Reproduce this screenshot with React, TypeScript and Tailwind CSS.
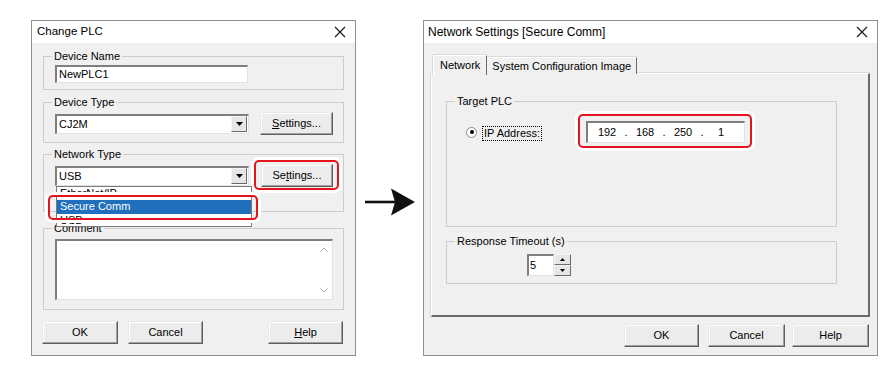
import React from "react";

const CloseX = () => (
  <svg width="12" height="12" viewBox="0 0 12 12">
    <path d="M1 1 L11 11 M11 1 L1 11" stroke="#1a1a1a" strokeWidth="1.2" fill="none" />
  </svg>
);

const Btn = ({ children, className = "" }: { children: React.ReactNode; className?: string }) => (
  <div
    className={`flex h-[23px] items-center justify-center border border-t-[#e8e8e8] border-l-[#e8e8e8] border-r-[#5e5e5e] border-b-[#5e5e5e] bg-[#ececec] text-[11px] text-black shadow-[inset_-1px_-1px_0_#a0a0a0,inset_1px_1px_0_#ffffff] ${className}`}
  >
    {children}
  </div>
);

const Sunken = ({ children, className = "" }: { children?: React.ReactNode; className?: string }) => (
  <div
    className={`border-t-2 border-l-2 border-r border-b border-t-[#7e7e7e] border-l-[#7e7e7e] border-r-[#e3e3e3] border-b-[#e3e3e3] bg-white ${className}`}
  >
    {children}
  </div>
);

const DropArrow = () => (
  <div className="flex h-[16px] w-[16px] items-center justify-center border border-t-[#f4f4f4] border-l-[#f4f4f4] border-r-[#6a6a6a] border-b-[#6a6a6a] bg-[#e6e6e6]">
    <svg width="7" height="4" viewBox="0 0 7 4">
      <path d="M0 0 L7 0 L3.5 4 Z" fill="#000" />
    </svg>
  </div>
);

const Combo = ({ text, children }: { text: string; children?: React.ReactNode }) => (
  <div className="relative">
    <Sunken className="flex h-[20px] w-[194px] items-center justify-between pl-[2px] pr-[1px]">
      <span className="text-[11px] text-black">{text}</span>
      <DropArrow />
    </Sunken>
    {children}
  </div>
);

const Group = ({
  label,
  className = "",
  children,
}: {
  label: string;
  className?: string;
  children: React.ReactNode;
}) => (
  <fieldset className={`border border-[#cdcdcd] ${className}`}>
    <legend className="ml-[8px] px-[2px] text-[11px] leading-[13px] text-black">{label}</legend>
    {children}
  </fieldset>
);

const RedBox = ({ className }: { className: string }) => (
  <div
    className={`pointer-events-none absolute rounded-[5px] border-2 border-[#e3141c] shadow-[0_0_0_3px_#ffffff] ${className}`}
  />
);

export default function App() {
  return (
    <div className="flex h-[382px] w-[893px] items-start overflow-hidden bg-white font-['Liberation_Sans',Arial,sans-serif]">
      {/* Left dialog */}
      <div className="ml-[31px] mt-[20px] flex h-[336px] w-[325px] flex-col border border-[#8f8f8f] bg-[#f0f0f0]">
        <div className="flex h-[22px] items-center justify-between bg-white pl-[5px] pr-[9px]">
          <span className="text-[11.5px] text-black">Change PLC</span>
          <CloseX />
        </div>
        <div className="flex flex-col px-[11px]">
          <Group label="Device Name" className="mt-[7px]">
            <div className="pl-[11px] pt-[2px] pb-[6px]">
              <Sunken className="flex h-[18px] w-[193px] items-center pl-[2px] text-[11px] text-black">
                NewPLC1
              </Sunken>
            </div>
          </Group>
          <Group label="Device Type" className="mt-[6px]">
            <div className="flex items-center pl-[11px] pt-[3px] pb-[7px]">
              <Combo text="CJ2M" />
              <Btn className="ml-[11px] w-[73px]">
                <span>
                  <span className="underline">S</span>ettings...
                </span>
              </Btn>
            </div>
          </Group>
          <Group label="Network Type" className="mt-[5px]">
            <div className="flex items-center pl-[11px] pt-[3px] pb-[24px]">
              <Combo text="USB">
                <div className="absolute left-[1px] top-full z-10 flex h-[41px] w-[196px] flex-col overflow-hidden border border-[#7a7a7a] bg-white">
                  <div className="flex h-[13px] items-center pl-[3px] text-[11px] text-black">EtherNet/IP</div>
                  <div className="relative flex h-[14px] items-center bg-[#1f6fbd] pl-[3px] text-[11px] text-white">
                    Secure Comm
                  </div>
                  <div className="flex h-[13px] items-start pl-[3px] text-[11px] leading-[13px] text-black">USB</div>
                </div>
                <div className="absolute left-[1px] top-[34px] z-20 h-[14px] w-[196px]">
                  <RedBox className="-left-[8px] -right-[6px] -top-[5px] -bottom-[6px]" />
                </div>
              </Combo>
              <div className="relative ml-[12px]">
                <Btn className="w-[72px]">
                  <span>
                    Se<span className="underline">t</span>tings...
                  </span>
                </Btn>
                <RedBox className="-left-[7px] -right-[6px] -top-[4px] -bottom-[3px]" />
              </div>
            </div>
          </Group>
          <Group label="Comment" className="mt-[10px]">
            <div className="pl-[11px] pr-[9px] pt-[4px] pb-[9px]">
              <Sunken className="flex h-[61px] w-[278px] justify-end">
                <div className="flex w-[16px] flex-col items-center justify-between py-[6px]">
                  <svg width="8" height="5" viewBox="0 0 8 5">
                    <path d="M0.5 4.5 L4 1 L7.5 4.5" stroke="#a8a8a8" fill="none" />
                  </svg>
                  <svg width="8" height="5" viewBox="0 0 8 5">
                    <path d="M0.5 0.5 L4 4 L7.5 0.5" stroke="#a8a8a8" fill="none" />
                  </svg>
                </div>
              </Sunken>
            </div>
          </Group>
        </div>
        <div className="mt-[11px] flex pl-[10px] pr-[12px]">
          <Btn className="w-[76px]">OK</Btn>
          <Btn className="ml-[10px] w-[75px]">Cancel</Btn>
          <Btn className="ml-auto w-[75px]">
            <span>
              <span className="underline">H</span>elp
            </span>
          </Btn>
        </div>
      </div>

      {/* Arrow */}
      <svg className="ml-[8px] mt-[187px] shrink-0" width="52" height="30" viewBox="0 0 52 30">
        <line x1="1" y1="15" x2="32" y2="15" stroke="#111" strokeWidth="2.6" />
        <path d="M27 1.5 L51 15 L27 28.5 L31 15 Z" fill="#111" />
      </svg>

      {/* Right dialog */}
      <div className="ml-[7px] mt-[20px] flex h-[336px] w-[455px] flex-col border border-[#8f8f8f] bg-[#f0f0f0]">
        <div className="flex h-[22px] items-center justify-between bg-white pl-[4px] pr-[9px]">
          <span className="text-[12px] text-black">Network Settings [Secure Comm]</span>
          <CloseX />
        </div>
        <div className="mt-[12px] flex flex-col px-[7px]">
          <div className="relative z-10 flex items-end pl-[2px]">
            <div className="-mb-[1px] flex h-[20px] items-center border-l border-t border-r border-l-[#ffffff] border-t-[#ffffff] border-r-[#6a6a6a] bg-[#f0f0f0] px-[6px] text-[11px] text-black shadow-[-1px_0_0_#dadada,0_-1px_0_#dadada]">
              Network
            </div>
            <div className="flex h-[17px] items-center border-t border-r border-t-[#ffffff] border-r-[#6a6a6a] bg-[#f0f0f0] px-[5px] text-[11px] text-black shadow-[0_-1px_0_#dadada]">
              System Configuration Image
            </div>
          </div>
          <div className="-mt-[1px] flex h-[244px] flex-col border-l border-t border-r-2 border-b-2 border-l-[#ffffff] border-t-[#ffffff] border-r-[#6a6a6a] border-b-[#6a6a6a] shadow-[-1px_0_0_#dadada,0_-1px_0_#dadada] pl-[14px]">
            <Group label="Target PLC" className="mt-[21px] h-[132px] w-[391px]">
              <div className="flex items-center pl-[19px] pt-[13px]">
                <div className="flex h-[11px] w-[11px] items-center justify-center rounded-full border border-[#8a8a8a] bg-white">
                  <div className="h-[4px] w-[4px] rounded-full bg-black" />
                </div>
                <span className="ml-[5px] mt-[3px] border border-dotted border-black px-[1px] text-[11px] leading-[13px] text-black">
                  IP Address:
                </span>
                <div className="relative ml-[44px]">
                  <Sunken className="flex h-[22px] w-[159px] items-center pl-[2px] text-[11px] text-black">
                    <span className="w-[34px] text-center">192</span>
                    <span className="w-[4px] text-center">.</span>
                    <span className="w-[34px] text-center">168</span>
                    <span className="w-[4px] text-center">.</span>
                    <span className="w-[34px] text-center">250</span>
                    <span className="w-[4px] text-center">.</span>
                    <span className="w-[34px] text-center">1</span>
                  </Sunken>
                  <RedBox className="-left-[8px] -right-[7px] -top-[7px] -bottom-[5px]" />
                </div>
              </div>
            </Group>
            <Group label="Response Timeout (s)" className="mt-[8px] h-[49px] w-[391px]">
              <div className="flex pl-[80px] pt-[6px]">
                <Sunken className="flex h-[22px] w-[27px] items-center pl-[1px] text-[11px] text-black">5</Sunken>
                <div className="flex h-[22px] w-[17px] flex-col">
                  <div className="flex h-[11px] items-center justify-center border border-t-[#f4f4f4] border-l-[#f4f4f4] border-r-[#6a6a6a] border-b-[#6a6a6a] bg-[#e6e6e6]">
                    <svg width="5" height="3" viewBox="0 0 5 3">
                      <path d="M0 3 L5 3 L2.5 0 Z" fill="#000" />
                    </svg>
                  </div>
                  <div className="flex h-[11px] items-center justify-center border border-t-[#f4f4f4] border-l-[#f4f4f4] border-r-[#6a6a6a] border-b-[#6a6a6a] bg-[#e6e6e6]">
                    <svg width="5" height="3" viewBox="0 0 5 3">
                      <path d="M0 0 L5 0 L2.5 3 Z" fill="#000" />
                    </svg>
                  </div>
                </div>
              </div>
            </Group>
          </div>
        </div>
        <div className="mt-[7px] flex justify-end pr-[8px]">
          <Btn className="w-[75px]">OK</Btn>
          <Btn className="ml-[9px] w-[77px]">Cancel</Btn>
          <Btn className="ml-[7px] w-[77px]">Help</Btn>
        </div>
      </div>
    </div>
  );
}
